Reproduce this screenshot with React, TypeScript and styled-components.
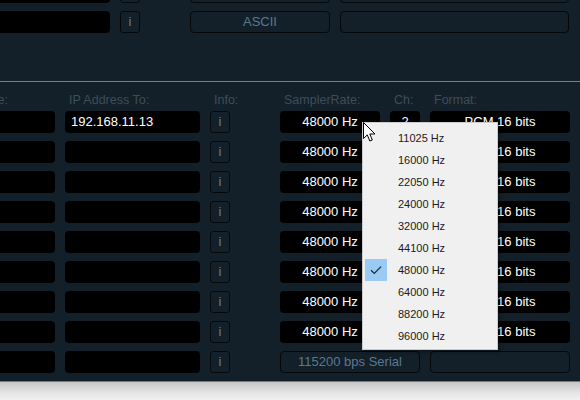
import styled, { createGlobalStyle } from 'styled-components';

const GlobalStyle = createGlobalStyle`
  html, body {
    margin: 0;
    padding: 0;
    background: #f0f0f0;
  }
  body {
    font-family: "Liberation Sans", Arial, sans-serif;
    overflow: hidden;
  }
`;

const rates = [
  '11025 Hz',
  '16000 Hz',
  '22050 Hz',
  '24000 Hz',
  '32000 Hz',
  '44100 Hz',
  '48000 Hz',
  '64000 Hz',
  '88200 Hz',
  '96000 Hz',
];

const rows = ['192.168.11.13', '', '', '', '', '', '', ''];

export default function App() {
  return (
    <>
      <GlobalStyle />
      <Screen>
        <Window>
          <TopPanel>
            <TopGrid>
              <Field />
              <InfoButton>i</InfoButton>
              <span />
              <PlainButton />
              <PlainButton />

              <Field />
              <InfoButton>i</InfoButton>
              <span />
              <PlainButton>ASCII</PlainButton>
              <PlainButton />
            </TopGrid>
          </TopPanel>
          <Divider />
          <MainPanel>
            <HeaderGrid>
              <Label $first>Name:</Label>
              <Label>IP Address To:</Label>
              <Label>Info:</Label>
              <span />
              <Label>SamplerRate:</Label>
              <Label>Ch:</Label>
              <Label>Format:</Label>
            </HeaderGrid>
            <Rows>
              {rows.map((ip, i) => (
                <RowGrid key={i}>
                  <Field />
                  <Field $align="left">{ip}</Field>
                  <InfoButton>i</InfoButton>
                  <span />
                  <Field>48000 Hz</Field>
                  <Field>2</Field>
                  <Field>PCM 16 bits</Field>
                </RowGrid>
              ))}
              <RowGrid>
                <Field />
                <Field />
                <InfoButton>i</InfoButton>
                <span />
                <PlainButton $span={2}>115200 bps Serial</PlainButton>
                <PlainButton />
              </RowGrid>
            </Rows>
          </MainPanel>
        </Window>
        <Shadow />

        <Menu>
          {rates.map((r) => (
            <MenuItem key={r}>
              <Check $on={r === '48000 Hz'}>
                {r === '48000 Hz' && (
                  <svg width="12" height="10" viewBox="0 0 12 10">
                    <path d="M1 5.2 L4.3 8.4 L11 1.6" fill="none" stroke="#1f2a33" strokeWidth="1.3" />
                  </svg>
                )}
              </Check>
              <span>{r}</span>
            </MenuItem>
          ))}
        </Menu>

        <Cursor width="13" height="21" viewBox="0 0 13 21">
          <path
            d="M0.5 0.5 L0.5 16.5 L4.3 12.9 L6.8 19 L9.3 18 L6.8 12 L12 12 Z"
            fill="#fff"
            stroke="#000"
            strokeWidth="1"
            strokeLinejoin="round"
          />
        </Cursor>
      </Screen>
    </>
  );
}

const Screen = styled.div`
  position: relative;
  width: 580px;
  height: 400px;
  overflow: hidden;
`;

const Window = styled.div`
  margin-left: -40px;
  width: 620px;
  background: #13202a;
  border-bottom: 1px solid #3e87c9;
`;

const TopPanel = styled.div`
  height: 81px;
  overflow: hidden;
`;

const TopGrid = styled.div`
  display: grid;
  grid-template-columns: 150px 20px 30px 140px 229px;
  grid-auto-rows: 22px;
  column-gap: 10px;
  row-gap: 8px;
  margin-top: -19px;
`;

const Divider = styled.div`
  height: 1px;
  background: #6f818e;
`;

const MainPanel = styled.div`
  padding: 10px 0 8px;
`;

const HeaderGrid = styled.div`
  display: grid;
  grid-template-columns: 95px 135px 20px 30px 100px 30px 140px;
  column-gap: 10px;
  height: 16px;
`;

const RowGrid = styled(HeaderGrid)`
  height: 22px;
`;

const Rows = styled.div`
  display: flex;
  flex-direction: column;
  gap: 8px;
  margin-top: 3px;
`;

const Label = styled.div<{ $first?: boolean }>`
  font-size: 12.5px;
  line-height: 16px;
  height: 16px;
  color: #3d4d59;
  white-space: nowrap;
  padding-left: ${(p) => (p.$first ? '0' : '4px')};
  padding-right: ${(p) => (p.$first ? '47px' : '0')};
  text-align: ${(p) => (p.$first ? 'right' : 'left')};
`;

const Field = styled.div<{ $align?: 'left' | 'center' }>`
  background: #000;
  border-radius: 4px;
  color: #fff;
  font-size: 13px;
  line-height: 22px;
  height: 22px;
  text-align: ${(p) => p.$align ?? 'center'};
  padding: 0 ${(p) => (p.$align === 'left' ? '6px' : '0')};
  white-space: nowrap;
  overflow: hidden;
`;

const InfoButton = styled.div`
  box-sizing: border-box;
  height: 22px;
  border: 1px solid #05090c;
  border-radius: 3px;
  color: #6d7d88;
  font-size: 13px;
  line-height: 20px;
  text-align: center;
`;

const PlainButton = styled.div<{ $span?: number }>`
  box-sizing: border-box;
  grid-column: span ${(p) => p.$span ?? 1};
  height: 22px;
  border: 1px solid #04080b;
  border-radius: 4px;
  color: #5a7990;
  font-size: 13px;
  line-height: 20px;
  text-align: center;
  white-space: nowrap;
`;

const Shadow = styled.div`
  height: 19px;
  background: linear-gradient(#c6c6c6, #e6e6e6 60%, #f2f2f2);
`;

const Menu = styled.div`
  position: absolute;
  left: 362px;
  top: 122px;
  width: 134px;
  padding: 4px 0 2px;
  background: #f0f0f0;
  border: 1px solid #cccccc;
  box-shadow: 2px 2px 3px rgba(0, 0, 0, 0.35);
`;

const MenuItem = styled.div`
  display: flex;
  align-items: center;
  height: 22px;
  padding-left: 2px;
  font-size: 11px;
  color: #1b1b1b;
  span {
    margin-left: 11px;
  }
`;

const Check = styled.div<{ $on: boolean }>`
  width: 22px;
  height: 22px;
  display: flex;
  align-items: center;
  justify-content: center;
  background: ${(p) => (p.$on ? '#99cbf5' : 'transparent')};
`;

const Cursor = styled.svg`
  position: absolute;
  left: 363px;
  top: 122px;
`;
